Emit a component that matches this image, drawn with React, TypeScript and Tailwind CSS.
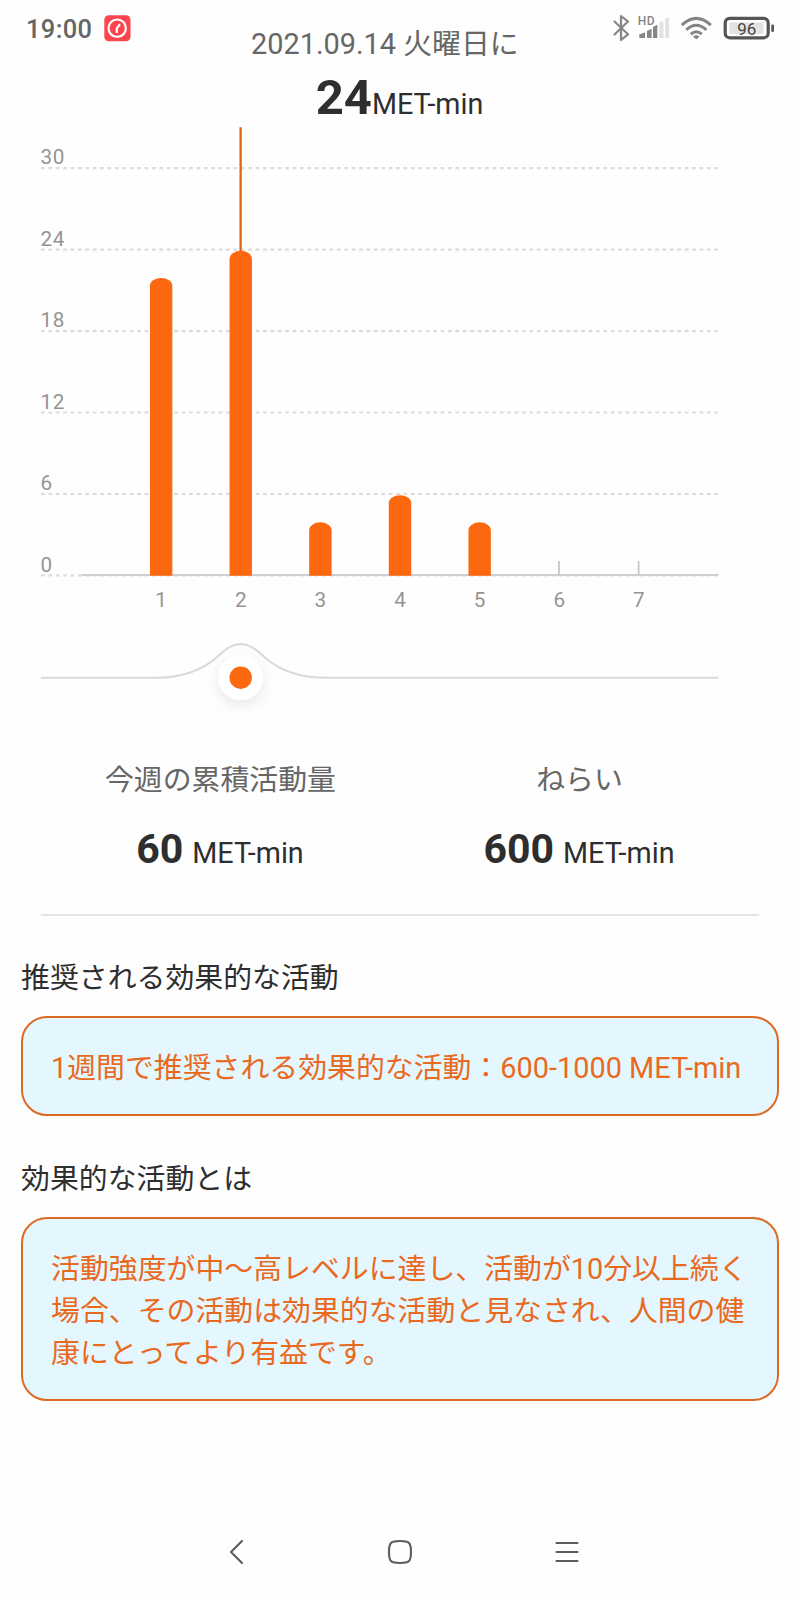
const days = [
	{ day: 1, value: 22 },
	{ day: 2, value: 24 },
	{ day: 3, value: 4 },
	{ day: 4, value: 6 },
	{ day: 5, value: 4 },
	{ day: 6, value: 0 },
	{ day: 7, value: 0 },
];

const ticks = [30, 24, 18, 12, 6, 0];
const BASE = 455.6;
const UNIT = 13.575;
const SELECTED = 2;

const dayX = (day: number) => 81.5 + day * 79.63;
const valueY = (value: number) => BASE - value * UNIT;

const StatusIcons = () => (
	<svg width="170" height="32" viewBox="610 12 170 32" fill="none">
		<path
			d="M614.5 21.5L628 34.3L621 40V16L628 21.5L614.5 34.5"
			stroke="#858585"
			strokeWidth="2.2"
			strokeLinejoin="round"
			strokeLinecap="round"
		/>
		<text x="637.8" y="24.6" fontSize="12" fontWeight="500" letterSpacing="0.4" fill="#858585">
			HD
		</text>
		<g fill="#858585">
			<path d="M639.3 38V34.4L645 32.3V38Z" />
			<path d="M647 38V31L651.6 28.8V38Z" />
			<path d="M653 38V27L657.3 24.7V38Z" />
		</g>
		<g fill="#e2e2e2">
			<path d="M659.3 38V22.8L663.4 20.6V38Z" />
			<path d="M665.2 38V19L669 17V38Z" />
		</g>
		<g stroke="#858585" strokeWidth="3">
			<path d="M681.8 25.1Q696.3 11.6 710.8 25.1" />
			<path d="M686.3 29.8Q696.3 20.8 706.3 29.8" />
			<path d="M690.8 34.2Q696.3 29.4 701.8 34.2" />
		</g>
		<path d="M693 36.6Q696.3 34 699.6 36.6L696.3 39.6Z" fill="#858585" />
		<rect x="725.2" y="18.4" width="43" height="19.4" rx="4.5" stroke="#555" strokeWidth="3.2" />
		<rect x="729.5" y="22.4" width="34" height="11.6" fill="#e3e3e3" />
		<rect x="771.3" y="24.4" width="2.7" height="7.6" rx="1.2" fill="#555" />
		<text x="746.8" y="34.6" fontSize="17" textAnchor="middle" fill="#444">
			96
		</text>
	</svg>
);

const AppBadge = () => (
	<svg width="27" height="27" viewBox="0 0 27 27" fill="none">
		<rect x="0.3" y="0.3" width="26.2" height="26" rx="4.5" fill="#fb4650" />
		<circle cx="13.2" cy="13.2" r="8.7" stroke="#fff" strokeWidth="2.2" />
		<path d="M12.8 18V13.4L16 9.3" stroke="#fff" strokeWidth="2.2" />
	</svg>
);

const Chart = () => (
	<svg className="block" width="800" height="500" viewBox="0 0 800 500" fill="none">
		{ticks.map((tick) => (
			<g key={tick}>
				<line
					x1="41"
					x2="718.5"
					y1={valueY(tick) - 0.2}
					y2={valueY(tick) - 0.2}
					stroke="#dcdcdc"
					strokeWidth="2.2"
					strokeDasharray="3.7 3.7"
				/>
				<text x="40.5" y={valueY(tick) - 4} fontSize="20.7" letterSpacing="0.6" fill="#949494">
					{tick}
				</text>
			</g>
		))}
		<line x1="81.5" x2="718.5" y1={BASE - 0.6} y2={BASE - 0.6} stroke="#cfcfcf" strokeWidth="1.8" />
		<rect x={dayX(SELECTED) - 1.3} y="7.3" width="2.3" height="126" fill="#dc6616" />
		{days.map(({ day, value }) => {
			const x = dayX(day);
			const top = valueY(value) + 1;
			return (
				<g key={day}>
					{value > 0 ? (
						<path
							d={`M${x - 11.2} ${BASE + 0.2}V${top + 8}A11.2 8 0 0 1 ${x + 11.2} ${top + 8}V${BASE + 0.2}Z`}
							fill="#fc6810"
						/>
					) : (
						<line x1={x - 0.3} x2={x - 0.3} y1="441" y2={BASE - 1} stroke="#c6c6c6" strokeWidth="1.8" />
					)}
					<text x={x} y="486.7" fontSize="20.7" textAnchor="middle" fill="#949494">
						{day}
					</text>
				</g>
			);
		})}
	</svg>
);

const DaySlider = () => (
	<svg className="block" width="800" height="120" viewBox="0 620 800 120" fill="none">
		<defs>
			<filter id="knob" x="-50%" y="-50%" width="200%" height="200%">
				<feDropShadow dx="0" dy="5" stdDeviation="7" floodColor="#000" floodOpacity="0.09" />
			</filter>
		</defs>
		<path
			d="M41 677.8H155C182 677.8 204 669.7 219.3 655C226 648.5 233 644 240.6 644C248.2 644 255.4 648.5 262.1 655C277.4 669.7 299.4 677.8 326.4 677.8H718.5"
			stroke="#dadada"
			strokeWidth="2.1"
		/>
		<circle cx="240.7" cy="677.7" r="22.4" fill="#fff" filter="url(#knob)" />
		<circle cx="240.7" cy="677.7" r="11.2" fill="#fc6810" />
	</svg>
);

const Stat = ({ label, value }: { label: string; value: number }) => (
	<div className="flex flex-col items-center">
		<p className="leading-[42px] text-[#666]">{label}</p>
		<p className="mt-[21px] mr-px leading-[54px] text-[#2e2e2e]">
			<span className="text-[41px] font-bold">{value}</span>
			<span className="ml-[9px] text-[28.7px]">MET-min</span>
		</p>
	</div>
);

const Card = ({ children }: { children: React.ReactNode }) => (
	<div className="rounded-[26px] border-2 border-[#dd6a22] bg-[#e4f7ff] px-[28px] pt-[29px] pb-[25px] leading-[42px] whitespace-nowrap text-[#e96a1e]">
		{children}
	</div>
);

const App = () => {
	return (
		<main
			lang="ja"
			className="flex h-[1600px] w-[800px] flex-col overflow-hidden bg-[#fefefe] font-[Roboto,'Noto_Sans_CJK_JP',sans-serif] text-[28.88px]"
		>
			<header className="flex h-[69px] items-start pr-[20px] pl-[26px]">
				<div className="flex w-[225px] items-center gap-3 pt-[14px]">
					<span className="w-[66px] pt-px text-[25.4px] leading-7 font-medium tracking-[0.4px] whitespace-nowrap text-[#666]">
						19:00
					</span>
					<AppBadge />
				</div>
				<p className="pt-[23px] leading-[42px] whitespace-nowrap text-[#666]">2021.09.14 火曜日に</p>
				<div className="ml-auto pt-3">
					<StatusIcons />
				</div>
			</header>
			<p className="h-[51px] pr-px text-center leading-[58px] text-[#2e2e2e]">
				<span className="text-[49px] font-bold">24</span>
				<span className="text-[28.7px]">MET-min</span>
			</p>
			<Chart />
			<DaySlider />
			<section className="mx-[41px] grid h-[176px] grid-cols-2 border-b-2 border-[#e4e4e4] pt-[19px]">
				<Stat label="今週の累積活動量" value={60} />
				<Stat label="ねらい" value={600} />
			</section>
			<section className="px-[21px] pt-[41px]">
				<h2 className="mb-[17px] leading-[42px] text-[#2e2e2e]">推奨される効果的な活動</h2>
				<Card>1週間で推奨される効果的な活動：600-1000 MET-min</Card>
				<h2 className="mt-[42px] mb-[17px] leading-[42px] text-[#2e2e2e]">効果的な活動とは</h2>
				<Card>
					活動強度が中〜高レベルに達し、活動が10分以上続く
					<br />
					場合、その活動は効果的な活動と見なされ、人間の健
					<br />
					康にとってより有益です。
				</Card>
			</section>
			<nav className="mt-auto flex h-[96px] justify-center">
				<svg width="400" height="90" viewBox="0 0 400 90" fill="none" stroke="#5c5c5c" strokeWidth="2.1" strokeLinecap="round">
					<path d="M42 37L31 48L42 59" strokeLinejoin="round" />
					<path d="M200 37C209.5 37 211 38.5 211 48C211 57.5 209.5 59 200 59C190.5 59 189 57.5 189 48C189 38.5 190.5 37 200 37Z" />
					<path d="M356.5 39H377.5M356.5 48H377.5M356.5 57H377.5" />
				</svg>
			</nav>
		</main>
	);
};

export default App;
